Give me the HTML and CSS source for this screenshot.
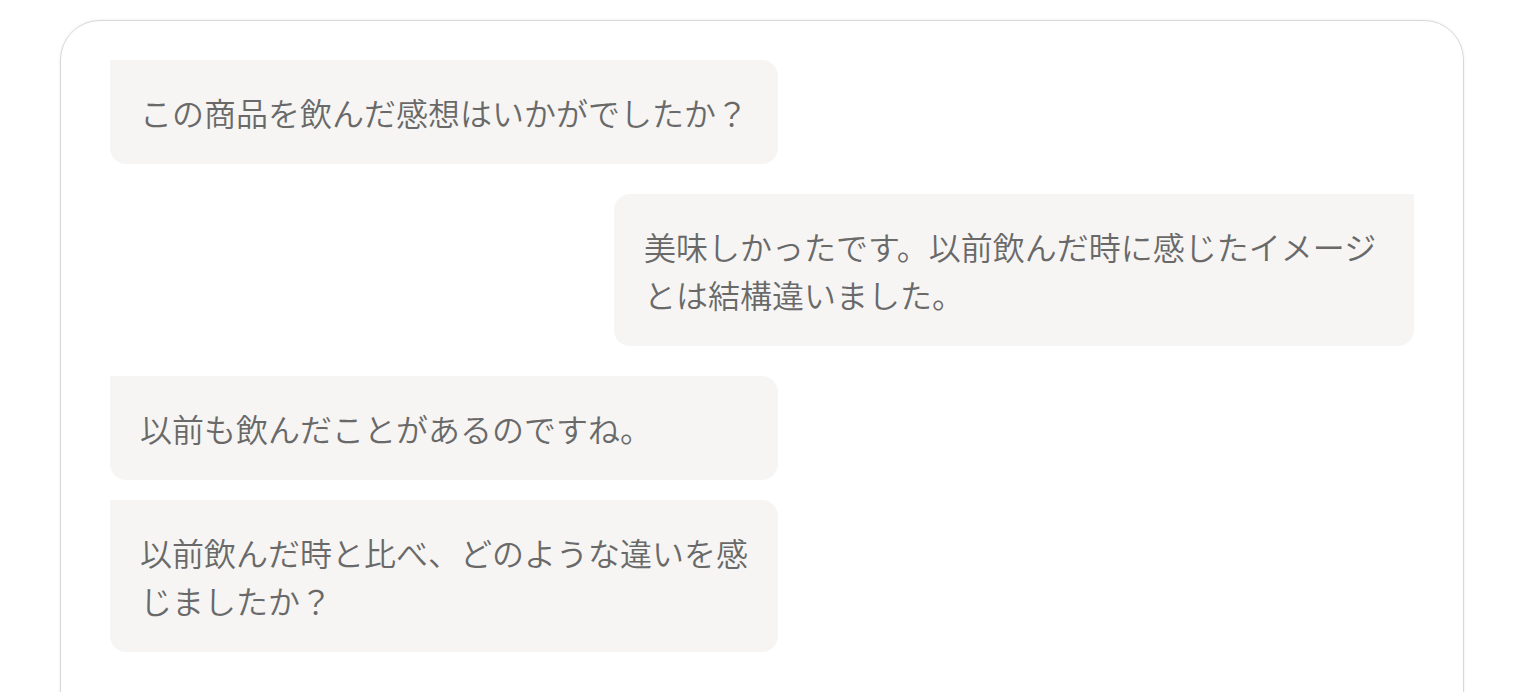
FILE: index.html
```html
<!DOCTYPE html>
<html lang="ja">
<head>
<meta charset="utf-8">
<title>Chat</title>
<link rel="stylesheet" href="styles.css">
</head>
<body>
<main class="card">
  <div class="msg msg-left">この商品を飲んだ感想はいかがでしたか？</div>
  <div class="msg msg-right">美味しかったです。以前飲んだ時に感じたイメージとは結構違いました。</div>
  <div class="msg msg-left">以前も飲んだことがあるのですね。</div>
  <div class="msg msg-left msg-follow">以前飲んだ時と比べ、どのような違いを感じましたか？</div>
</main>
</body>
</html>
```

FILE: styles.css
```css
html, body {
  margin: 0;
  padding: 0;
  background: #ffffff;
  overflow: hidden;
}

body {
  font-family: "Noto Sans CJK JP", "Noto Sans", sans-serif;
  font-weight: 350;
  color: #696969;
}

.card {
  margin: 20px 60px 0;
  padding: 39px 49px 80px;
  border: 1px solid #d8d8d8;
  border-radius: 40px 40px 0 0;
  box-shadow: 0 0 3px rgba(0, 0, 0, 0.08);
  display: flex;
  flex-direction: column;
  min-height: 700px;
}

.msg {
  box-sizing: border-box;
  background: #f6f5f3;
  font-size: 32px;
  line-height: 48px;
  margin-top: 30px;
}

.msg:first-child {
  margin-top: 0;
}

.msg-left {
  align-self: flex-start;
  width: 668px;
  padding: 28px 28px 28px 30px;
  border-radius: 0 16px 16px 16px;
}

.msg-right {
  align-self: flex-end;
  width: 800px;
  padding: 28px 30px 28px 30px;
  border-radius: 16px 0 16px 16px;
}

.msg-follow {
  margin-top: 20px;
}
```
